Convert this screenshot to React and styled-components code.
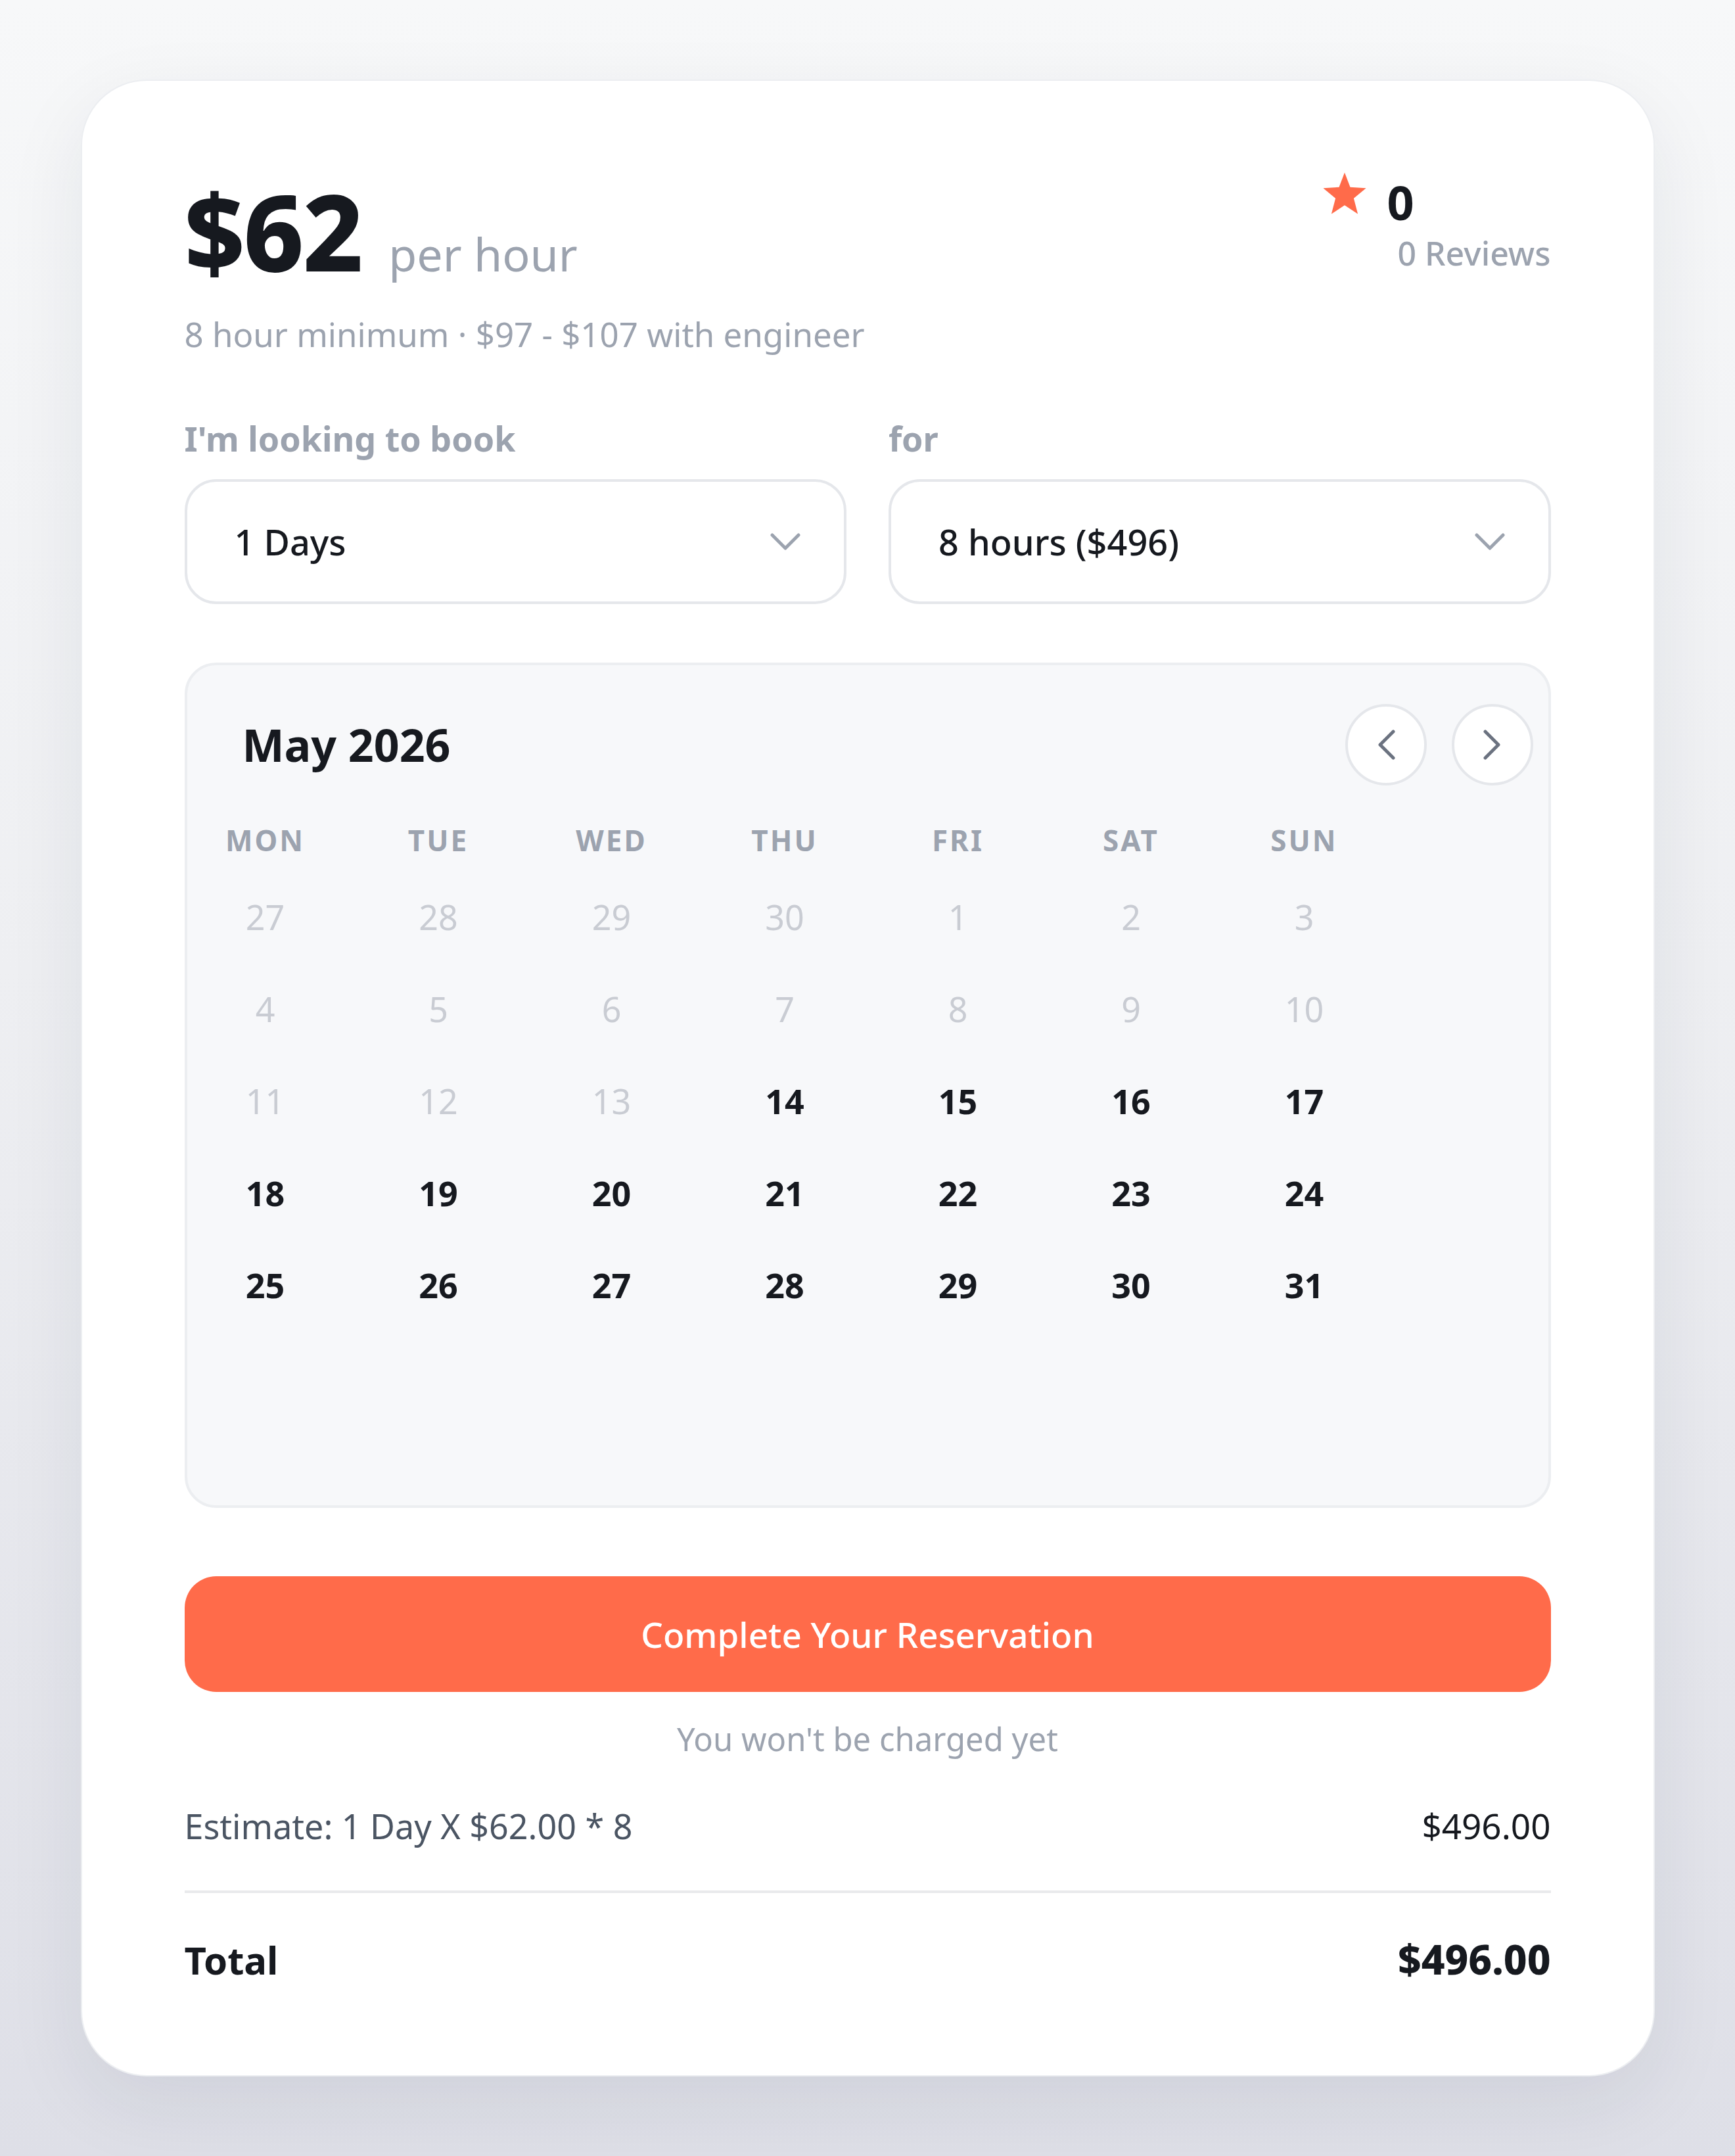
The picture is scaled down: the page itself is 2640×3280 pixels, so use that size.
import React from 'react'
import styled, { createGlobalStyle } from 'styled-components'

const GlobalStyle = createGlobalStyle`
  html, body {
    margin: 0;
    min-height: 100%;
  }
  body {
    min-height: 3280px;
    font-family: 'Noto Sans', 'Open Sans', sans-serif;
    background: linear-gradient(180deg, #f7f8f9 0%, #eeeff2 45%, #dedfe7 100%);
  }
`

const Page = styled.div`
  display: flex;
  justify-content: center;
  padding-top: 121px;
`

const Card = styled.div`
  box-sizing: border-box;
  width: 2395px;
  padding: 148px 156px 137px;
  background: #fff;
  border: 2px solid #eceef1;
  border-radius: 100px;
  box-shadow: 0 40px 120px rgba(30, 35, 60, 0.08);
`

const Header = styled.div`
  display: flex;
  justify-content: space-between;
  align-items: flex-start;
`

const PriceLine = styled.div`
  display: flex;
  align-items: baseline;
`

const Price = styled.span`
  font-size: 160px;
  line-height: 1;
  font-weight: 800;
  color: #16191f;
  letter-spacing: -2px;
`

const PerHour = styled.span`
  margin-left: 40px;
  font-size: 70px;
  line-height: 1;
  color: #9ca3af;
`

const Subtitle = styled.div`
  margin-top: 44px;
  font-size: 51px;
  line-height: 1.3;
  color: #9ca3af;
`

const Rating = styled.div`
  display: grid;
  grid-template-columns: auto auto;
  column-gap: 30px;
  align-items: start;
`

const Star = styled.svg`
  width: 68px;
  height: 68px;
  margin-top: -10px;
`

const RatingValue = styled.div`
  font-size: 72px;
  line-height: 1;
  font-weight: 700;
  color: #16191f;
`

const Reviews = styled.div`
  grid-column: 2;
  margin-top: 10px;
  padding-left: 16px;
  font-size: 50px;
  line-height: 1.3;
  font-weight: 500;
  color: #9ca3af;
`

const Fields = styled.div`
  display: grid;
  grid-template-columns: 1fr 1fr;
  column-gap: 64px;
  margin-top: 92px;
`

const Label = styled.div`
  font-size: 52px;
  line-height: 1.3;
  font-weight: 700;
  color: #9ca3af;
`

const Select = styled.div`
  box-sizing: border-box;
  height: 190px;
  margin-top: 28px;
  padding: 0 66px 0 72px;
  display: flex;
  align-items: center;
  justify-content: space-between;
  border: 4px solid #e5e7eb;
  border-radius: 48px;
  font-size: 54px;
  font-weight: 500;
  color: #16191f;
`

const Calendar = styled.div`
  margin-top: 89px;
  padding: 59px 23px 265px 84px;
  background: #f7f8fa;
  border: 4px solid #eceef1;
  border-radius: 48px;
`

const CalHeader = styled.div`
  display: flex;
  justify-content: space-between;
  align-items: center;
`

const Month = styled.div`
  font-size: 68px;
  font-weight: 700;
  color: #16191f;
`

const NavGroup = styled.div`
  display: flex;
  gap: 38px;
`

const NavButton = styled.div`
  box-sizing: border-box;
  width: 124px;
  height: 124px;
  display: flex;
  align-items: center;
  justify-content: center;
  background: #fff;
  border: 4px solid #e5e7eb;
  border-radius: 50%;
`

const DayGrid = styled.div`
  display: grid;
  grid-template-columns: repeat(7, 70px);
  column-gap: 193.5px;
  justify-items: center;
`

const WeekDay = styled.div`
  margin-top: 55px;
  margin-bottom: 18px;
  font-size: 44px;
  line-height: 1.3;
  font-weight: 700;
  letter-spacing: 3px;
  color: #9ca3af;
  white-space: nowrap;
`

const Day = styled.div`
  height: 140px;
  line-height: 140px;
  font-size: 52px;
  font-weight: ${p => (p.$active ? 700 : 400)};
  color: ${p => (p.$active ? '#16191f' : '#c9ccd3')};
`

const ReserveButton = styled.div`
  height: 176px;
  margin-top: 104px;
  display: flex;
  align-items: center;
  justify-content: center;
  background: #ff6b4a;
  border-radius: 48px;
  font-size: 53px;
  font-weight: 500;
  color: #fff;
`

const Note = styled.div`
  margin-top: 40px;
  text-align: center;
  font-size: 49px;
  line-height: 1.3;
  color: #9ca3af;
`

const Row = styled.div`
  display: flex;
  justify-content: space-between;
  align-items: baseline;
  font-size: ${p => (p.$total ? '60px' : '52px')};
  font-weight: ${p => (p.$total ? 700 : 400)};
  line-height: 1.3;
  color: ${p => (p.$total ? '#16191f' : '#4b5563')};
`

const EstimateRow = styled(Row)`
  margin-top: 66px;
  padding-bottom: 63px;
  border-bottom: 4px solid #e9eaec;
`

const TotalRow = styled(Row)`
  margin-top: 60px;
`

const Amount = styled.span`
  color: #16191f;
  font-size: 53px;
`

const TotalLabel = styled.span`
  font-size: 58px;
`

const TotalAmount = styled.span`
  font-size: 62px;
  font-weight: 800;
`

const ChevronDown = () => (
  <svg width="46" height="26" viewBox="0 0 46 26" fill="none">
    <path d="M3 3 L23 23 L43 3" stroke="#9ca3af" strokeWidth="5" strokeLinecap="round" strokeLinejoin="round" />
  </svg>
)

const ChevronSide = ({ dir }) => (
  <svg width="30" height="46" viewBox="0 0 30 46" fill="none">
    <path
      d={dir === 'left' ? 'M26 3 L6 23 L26 43' : 'M4 3 L24 23 L4 43'}
      stroke="#6b7280"
      strokeWidth="5"
      strokeLinecap="round"
      strokeLinejoin="round"
    />
  </svg>
)

const weekDays = ['MON', 'TUE', 'WED', 'THU', 'FRI', 'SAT', 'SUN']

const days = [
  ...[27, 28, 29, 30, 1, 2, 3, 4, 5, 6, 7, 8, 9, 10, 11, 12, 13].map(d => ({ d, active: false })),
  ...Array.from({ length: 18 }, (_, i) => ({ d: i + 14, active: true })),
]

export default function App() {
  return (
    <Page>
      <GlobalStyle />
      <Card>
        <Header>
          <div>
            <PriceLine>
              <Price>$62</Price>
              <PerHour>per hour</PerHour>
            </PriceLine>
            <Subtitle>8 hour minimum · $97 - $107 with engineer</Subtitle>
          </div>
          <Rating>
            <Star viewBox="0 0 24 24">
              <polygon
                points="12,0.5 15,8.4 23.5,8.9 16.9,14.4 19.1,22.8 12,18.1 4.9,22.8 7.1,14.4 0.5,8.9 9,8.4"
                fill="#ff6b4a"
              />
            </Star>
            <RatingValue>0</RatingValue>
            <Reviews>0 Reviews</Reviews>
          </Rating>
        </Header>

        <Fields>
          <div>
            <Label>I'm looking to book</Label>
            <Select>
              1 Days
              <ChevronDown />
            </Select>
          </div>
          <div>
            <Label>for</Label>
            <Select>
              8 hours ($496)
              <ChevronDown />
            </Select>
          </div>
        </Fields>

        <Calendar>
          <CalHeader>
            <Month>May 2026</Month>
            <NavGroup>
              <NavButton>
                <ChevronSide dir="left" />
              </NavButton>
              <NavButton>
                <ChevronSide dir="right" />
              </NavButton>
            </NavGroup>
          </CalHeader>
          <DayGrid>
            {weekDays.map(w => (
              <WeekDay key={w}>{w}</WeekDay>
            ))}
            {days.map((item, i) => (
              <Day key={i} $active={item.active}>
                {item.d}
              </Day>
            ))}
          </DayGrid>
        </Calendar>

        <ReserveButton>Complete Your Reservation</ReserveButton>
        <Note>You won't be charged yet</Note>

        <EstimateRow>
          <span>Estimate: 1 Day X $62.00 * 8</span>
          <Amount>$496.00</Amount>
        </EstimateRow>
        <TotalRow $total>
          <TotalLabel>Total</TotalLabel>
          <TotalAmount>$496.00</TotalAmount>
        </TotalRow>
      </Card>
    </Page>
  )
}
